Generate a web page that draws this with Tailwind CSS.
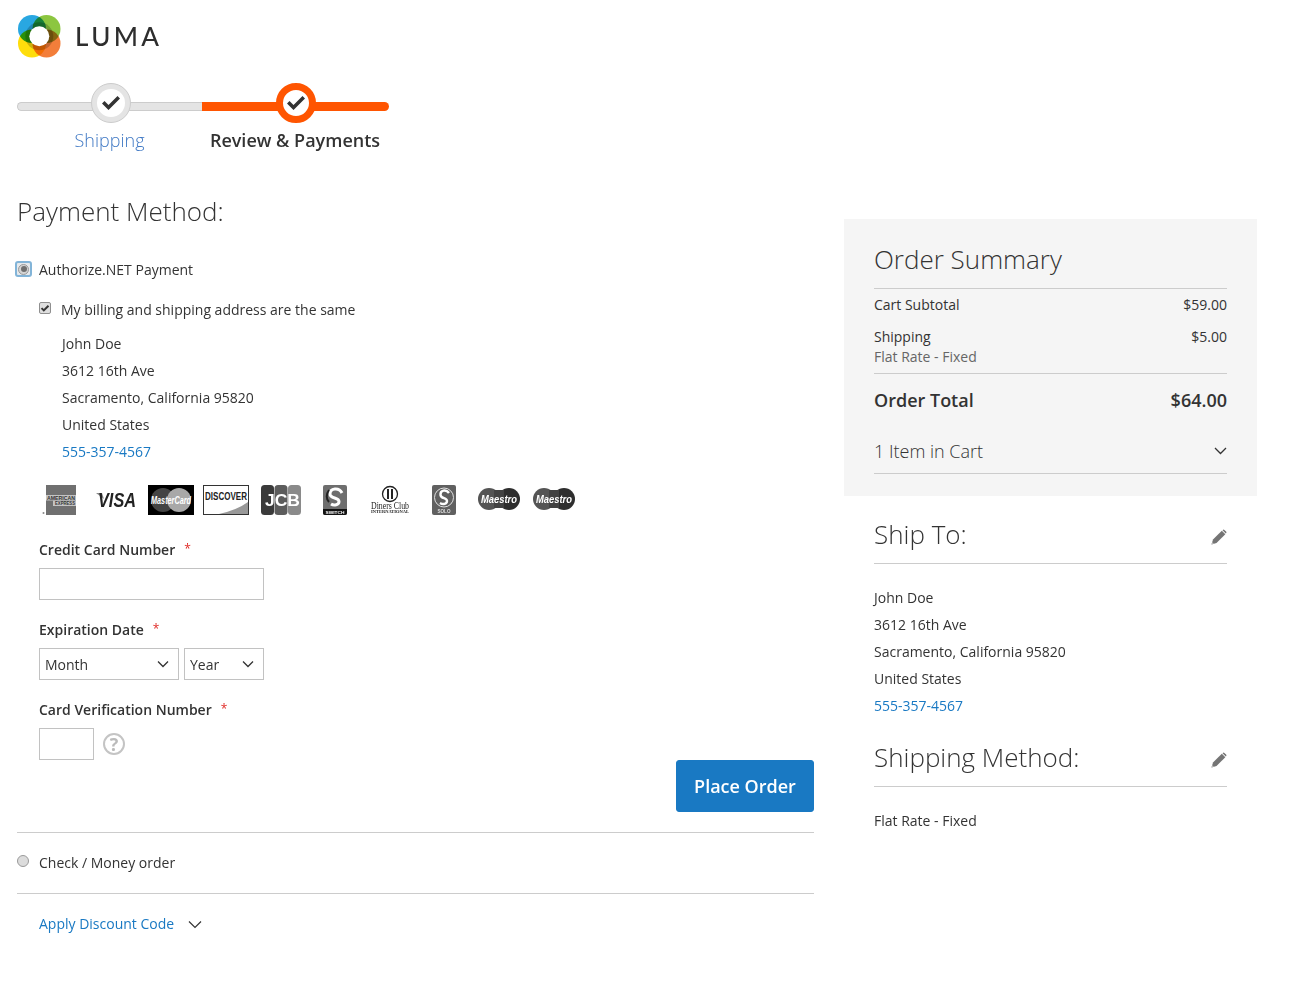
<!DOCTYPE html>
<html lang="en">
<head>
<meta charset="utf-8">
<title>Checkout</title>
<script src="https://cdn.jsdelivr.net/npm/@tailwindcss/browser@4"></script>
</head>
<body class="bg-white font-['Open_Sans',sans-serif] text-[14px] text-[#333]">
<div class="w-[1291px] h-[981px] overflow-hidden pl-[17px]">
  <header class="h-[72px] pt-[14px] flex items-start gap-[14px]">
    <svg width="44" height="44" viewBox="0 0 44 44" class="block">
      <circle cx="15" cy="15" r="14" fill="#29a7e1"/>
      <circle cx="29.5" cy="15" r="14" fill="#8cc640" style="mix-blend-mode:multiply"/>
      <circle cx="15" cy="29.5" r="14" fill="#fedd0c" style="mix-blend-mode:multiply"/>
      <circle cx="29.5" cy="29.5" r="14" fill="#f37e3a" style="mix-blend-mode:multiply"/>
      <circle cx="22.3" cy="22.3" r="14" fill="#000" fill-opacity="0.2"/>
      <circle cx="22.3" cy="22.3" r="10" fill="#fff"/>
    </svg>
    <span class="font-['Lato',sans-serif] text-[26px] leading-[44px] tracking-[3.4px] font-medium text-[#2e2e2e] whitespace-nowrap">LUMA</span>
  </header>

  <nav class="flex w-[372px] h-[68px] mt-[11px]">
    <div class="w-[185px] relative">
      <div class="absolute left-0 right-0 top-[19px] h-[9px] rounded-l-[6px] bg-[#e4e4e4] border border-r-0 border-[#ccc]"></div>
      <div class="absolute left-[74px] top-0 w-[40px] h-[40px] rounded-full bg-[#e4e4e4] border border-[#ccc] flex items-center justify-center">
        <div class="w-[28px] h-[28px] rounded-full bg-white flex items-center justify-center">
          <svg class="mt-[-2px]" width="18" height="15" viewBox="0 0 18 15"><path d="M0 8.5 L2.5 6 L6.5 10 L15.5 1 L18 3.5 L6.5 15 Z" fill="#333"/></svg>
        </div>
      </div>
      <div class="pt-[44px] text-center text-[18px] leading-[27px] font-light text-[#3f78c4]">Shipping</div>
    </div>
    <div class="w-[187px] relative">
      <div class="absolute left-0 right-0 top-[19px] h-[9px] rounded-r-[6px] bg-[#ff5501]"></div>
      <div class="absolute left-[74px] top-0 w-[40px] h-[40px] rounded-full border-[7px] border-[#ff5501] bg-white flex items-center justify-center">
        <svg class="mt-[-2px]" width="18" height="15" viewBox="0 0 18 15"><path d="M0 8.5 L2.5 6 L6.5 10 L15.5 1 L18 3.5 L6.5 15 Z" fill="#333"/></svg>
      </div>
      <div class="pt-[44px] text-center text-[18px] leading-[27px] font-semibold text-[#333] pr-[1px] whitespace-nowrap">Review &amp; Payments</div>
    </div>
  </nav>

  <main class="flex items-start gap-[30px] mt-[43px]">
    <section class="w-[797px] shrink-0">
      <h2 class="text-[26px] font-light leading-[34px] text-[#333]">Payment Method:</h2>

      <div class="flex items-center h-[20px] mt-[31px]">
        <span class="w-[17px] h-[16px] ml-[-2px] rounded-[3px] bg-[#e6e9ec] border-2 border-[#82b4d8] flex items-center justify-center">
          <span class="w-[11px] h-[11px] rounded-full bg-[#d4d4d4] border border-[#9a9a9a] flex items-center justify-center">
            <span class="w-[6px] h-[6px] rounded-full bg-[#6f6f6f]"></span>
          </span>
        </span>
        <label class="ml-[7px]">Authorize.NET Payment</label>
      </div>

      <div class="flex items-center h-[20px] mt-[20px] pl-[22px]">
        <span class="w-[12px] h-[12px] mt-[-2px] rounded-[2px] bg-[#dedede] border border-[#8f8f8f] flex items-center justify-center">
          <svg width="10" height="9" viewBox="0 0 10 9"><path d="M0.8 4.8 L2.2 3.4 L3.8 5 L7.8 1 L9.2 2.4 L3.8 7.8 Z" fill="#333"/></svg>
        </span>
        <label class="ml-[10px]">My billing and shipping address are the same</label>
      </div>

      <address class="not-italic pl-[45px] mt-[11px] leading-[27px]">
        <div>John Doe</div>
        <div>3612 16th Ave</div>
        <div>Sacramento, California 95820</div>
        <div>United States</div>
        <div class="text-[#1979c3]">555-357-4567</div>
      </address>

      <ul class="flex gap-[9px] pl-[21px] mt-[20px] h-[30px] blur-[0.4px]">
        <li><svg width="46" height="30" viewBox="0 0 46 30" class="block overflow-visible"><rect x="8" y="0" width="30" height="30" fill="#707070"/><rect x="8" y="10" width="30" height="5.5" fill="#c4c4c4"/><rect x="15" y="15.5" width="23" height="5.5" fill="#c4c4c4"/><text x="9" y="14.5" font-size="5" font-family="Liberation Sans" font-weight="700" fill="#333" textLength="28" lengthAdjust="spacingAndGlyphs">AMERICAN</text><text x="17" y="20" font-size="5" font-family="Liberation Sans" font-weight="700" fill="#333" textLength="20" lengthAdjust="spacingAndGlyphs">EXPRESS</text><circle cx="5.5" cy="28" r="1" fill="#888"/></svg></li>
        <li><svg width="46" height="30" viewBox="0 0 46 30" class="block overflow-visible"><path d="M3 8 L9 8 L11 14 Z" fill="#888"/><text x="5" y="22" font-size="20" font-family="Liberation Sans" font-weight="700" font-style="italic" fill="#222" textLength="38" lengthAdjust="spacingAndGlyphs">VISA</text></svg></li>
        <li><svg width="46" height="30" viewBox="0 0 46 30" class="block overflow-visible"><rect width="46" height="30" fill="#000"/><circle cx="15" cy="15" r="12" fill="#444"/><circle cx="31" cy="15" r="12" fill="#a8a8a8"/><text x="3" y="19" font-size="10.5" font-family="Liberation Sans" font-weight="700" font-style="italic" fill="#fff" textLength="40" lengthAdjust="spacingAndGlyphs">MasterCard</text></svg></li>
        <li><svg width="46" height="30" viewBox="0 0 46 30" class="block overflow-visible"><rect x="0.5" y="0.5" width="45" height="29" fill="#fff" stroke="#333"/><path d="M16 29 L45 29 L45 17 Q34 25 16 29 Z" fill="#999"/><text x="2" y="15" font-size="10" font-family="Liberation Sans" font-weight="700" fill="#222" textLength="42" lengthAdjust="spacingAndGlyphs">DISCOVER</text></svg></li>
        <li><svg width="46" height="30" viewBox="0 0 46 30" class="block overflow-visible"><rect x="3" y="0" width="13" height="30" rx="3.5" fill="#3a3a3a"/><rect x="16.5" y="0" width="13" height="30" rx="3.5" fill="#5c5c5c"/><rect x="30" y="0" width="13" height="30" rx="3.5" fill="#8a8a8a"/><text x="7" y="21" font-size="17" font-family="Liberation Sans" font-weight="700" fill="#fff" textLength="35" lengthAdjust="spacingAndGlyphs">JCB</text></svg></li>
        <li><svg width="46" height="30" viewBox="0 0 46 30" class="block overflow-visible"><rect x="10" y="0" width="24" height="30" rx="2" fill="#6e6e6e"/><path d="M10 24 H34 V28 a2 2 0 0 1 -2 2 H12 a2 2 0 0 1 -2 -2 Z" fill="#111"/><path d="M29 8 C26 2 17 3 17 9 C17 14 26 12 26 16.5 C26 20 21 21 18 19" fill="none" stroke="#fff" stroke-width="3"/><path d="M16 5 C13 9 13 14 16 17" fill="none" stroke="#222" stroke-width="2"/><text x="12.5" y="28.7" font-size="4.4" font-family="Liberation Sans" font-weight="700" fill="#fff" textLength="19" lengthAdjust="spacingAndGlyphs">SWITCH</text></svg></li>
        <li><svg width="46" height="30" viewBox="0 0 46 30" class="block overflow-visible"><circle cx="22" cy="9" r="7.5" fill="none" stroke="#222" stroke-width="1.3"/><path d="M20 4 V14 M24 4 V14" stroke="#222" stroke-width="2"/><text x="3" y="23.5" font-size="9.5" font-family="Liberation Serif" fill="#222" textLength="38" lengthAdjust="spacingAndGlyphs">Diners Club</text><text x="3" y="28" font-size="4.4" font-family="Liberation Serif" font-weight="700" fill="#222" textLength="38" lengthAdjust="spacingAndGlyphs">INTERNATIONAL</text></svg></li>
        <li><svg width="46" height="30" viewBox="0 0 46 30" class="block overflow-visible"><rect x="9" y="0" width="24" height="30" rx="2" fill="#606060"/><circle cx="21" cy="12.5" r="9.5" fill="none" stroke="#e0e0e0" stroke-width="1"/><path d="M26 8 C23 4 17 5 17.5 10 C18 14 24 12.5 24 16 C24 19 20 20 17 18" fill="none" stroke="#fff" stroke-width="2.4"/><text x="14.5" y="28" font-size="4.6" font-family="Liberation Sans" font-weight="700" fill="#ddd" textLength="13" lengthAdjust="spacingAndGlyphs">SOLO</text></svg></li>
        <li><svg width="46" height="30" viewBox="0 0 46 30" class="block overflow-visible"><circle cx="11" cy="14" r="11" fill="#545454"/><circle cx="31" cy="14" r="11" fill="#2e2e2e"/><rect x="16" y="5" width="10" height="18" fill="#424242"/><text x="3" y="18" font-size="10.5" font-family="Liberation Sans" font-weight="700" font-style="italic" fill="#fff" textLength="36" lengthAdjust="spacingAndGlyphs">Maestro</text></svg></li>
        <li><svg width="46" height="30" viewBox="0 0 46 30" class="block overflow-visible"><circle cx="11" cy="14" r="11" fill="#545454"/><circle cx="31" cy="14" r="11" fill="#2e2e2e"/><rect x="16" y="5" width="10" height="18" fill="#424242"/><text x="3" y="18" font-size="10.5" font-family="Liberation Sans" font-weight="700" font-style="italic" fill="#fff" textLength="36" lengthAdjust="spacingAndGlyphs">Maestro</text></svg></li>
      </ul>

      <div class="pl-[22px]">
        <div class="mt-[24px] h-[20px] flex items-center font-semibold">Credit Card Number<span class="ml-[9px] text-[12px] font-normal text-[#e02b27]">*</span></div>
        <div class="mt-[9px] w-[225px] h-[32px] border border-[#c2c2c2] bg-white"></div>

        <div class="mt-[19px] h-[20px] flex items-center font-semibold">Expiration Date<span class="ml-[9px] text-[12px] font-normal text-[#e02b27]">*</span></div>
        <div class="mt-[9px] flex gap-[5px]">
          <div class="w-[140px] h-[32px] border border-[#c2c2c2] flex items-center justify-between pl-[5px] pr-[9px]">Month
            <svg width="12" height="8" viewBox="0 0 12 8"><path d="M1 1.5 L6 6.5 L11 1.5" fill="none" stroke="#333" stroke-width="1.3"/></svg>
          </div>
          <div class="w-[80px] h-[32px] border border-[#c2c2c2] flex items-center justify-between pl-[5px] pr-[9px]">Year
            <svg width="12" height="8" viewBox="0 0 12 8"><path d="M1 1.5 L6 6.5 L11 1.5" fill="none" stroke="#333" stroke-width="1.3"/></svg>
          </div>
        </div>

        <div class="mt-[19px] h-[20px] flex items-center font-semibold">Card Verification Number<span class="ml-[9px] text-[12px] font-normal text-[#e02b27]">*</span></div>
        <div class="mt-[9px] flex items-center gap-[9px]">
          <div class="w-[55px] h-[32px] border border-[#c2c2c2] bg-white"></div>
          <span class="w-[22px] h-[22px] rounded-full border-2 border-[#c4c4c4] flex items-center justify-center text-[#bbb] text-[18px] font-bold leading-none">?</span>
        </div>
      </div>

      <div class="flex justify-end">
        <button class="w-[138px] h-[52px] bg-[#1979c3] border border-[#1979c3] rounded-[3px] text-white text-[18px] font-semibold">Place Order</button>
      </div>

      <div class="mt-[20px] border-t border-[#ccc] h-[61px] pb-[2px] flex items-center">
        <span class="w-[12px] h-[12px] mt-[-3px] rounded-full bg-[#dcdcdc] border border-[#9a9a9a]"></span>
        <label class="ml-[10px]">Check / Money order</label>
      </div>
      <div class="border-t border-[#ccc] h-[61px] pb-[2px] flex items-center pl-[22px] text-[#1979c3]">
        Apply Discount Code
        <svg class="ml-[14px] mt-[2px]" width="14" height="9" viewBox="0 0 14 9"><path d="M1 1.5 L7 7.5 L13 1.5" fill="none" stroke="#333" stroke-width="1.2"/></svg>
      </div>
    </section>

    <aside class="w-[413px] shrink-0 mt-[25px]">
      <div class="h-[277px] bg-[#f5f5f5] px-[30px] pt-[23px]">
        <h2 class="text-[26px] font-light leading-[34px] h-[46px]">Order Summary</h2>
        <div class="border-t border-[#ccc] pt-[6px]">
          <div class="flex justify-between leading-[20px]"><span>Cart Subtotal</span><span>$59.00</span></div>
          <div class="flex justify-between leading-[20px] mt-[12px]"><span>Shipping</span><span>$5.00</span></div>
          <div class="leading-[20px] text-[#666]">Flat Rate - Fixed</div>
        </div>
        <div class="border-t border-[#ccc] mt-[6px] pt-[13px] flex justify-between text-[18px] font-semibold leading-[27px]"><span>Order Total</span><span>$64.00</span></div>
        <div class="mt-[19px] pb-[3px] h-[41px] border-b border-[#ccc] flex justify-between items-center text-[18px] font-light">
          <span>1 Item in Cart</span>
          <svg width="13" height="8" viewBox="0 0 13 8" class="mt-[-2px]"><path d="M1 1 L6.5 6.5 L12 1" fill="none" stroke="#333" stroke-width="1.3"/></svg>
        </div>
      </div>

      <div class="px-[30px]">
        <div class="mt-[21px] h-[47px] border-b border-[#ccc] flex justify-between items-start">
          <h2 class="text-[26px] font-light leading-[34px]">Ship To:</h2>
          <svg class="mt-[12px]" width="16" height="16" viewBox="0 0 16 16"><path d="M0.5 15.5 L2 10.5 L10.8 1.7 L14.3 5.2 L5.5 14 Z" fill="#757575"/><path d="M11.8 0.9 Q12.6 0.1 13.4 0.9 L15.1 2.6 Q15.9 3.4 15.1 4.2 L14.8 4.5 L11.5 1.2 Z" fill="#757575"/><path d="M0.5 15.5 L1.2 13 L3 14.8 Z" fill="#b9b9b9"/></svg>
        </div>
        <address class="not-italic mt-[20px] leading-[27px]">
          <div>John Doe</div>
          <div>3612 16th Ave</div>
          <div>Sacramento, California 95820</div>
          <div>United States</div>
          <div class="text-[#1979c3]">555-357-4567</div>
        </address>
        <div class="mt-[21px] h-[47px] border-b border-[#ccc] flex justify-between items-start">
          <h2 class="text-[26px] font-light leading-[34px] whitespace-nowrap">Shipping Method:</h2>
          <svg class="mt-[12px]" width="16" height="16" viewBox="0 0 16 16"><path d="M0.5 15.5 L2 10.5 L10.8 1.7 L14.3 5.2 L5.5 14 Z" fill="#757575"/><path d="M11.8 0.9 Q12.6 0.1 13.4 0.9 L15.1 2.6 Q15.9 3.4 15.1 4.2 L14.8 4.5 L11.5 1.2 Z" fill="#757575"/><path d="M0.5 15.5 L1.2 13 L3 14.8 Z" fill="#b9b9b9"/></svg>
        </div>
        <div class="mt-[20px] leading-[27px]">Flat Rate - Fixed</div>
      </div>
    </aside>
  </main>
</div>
</body>
</html>
